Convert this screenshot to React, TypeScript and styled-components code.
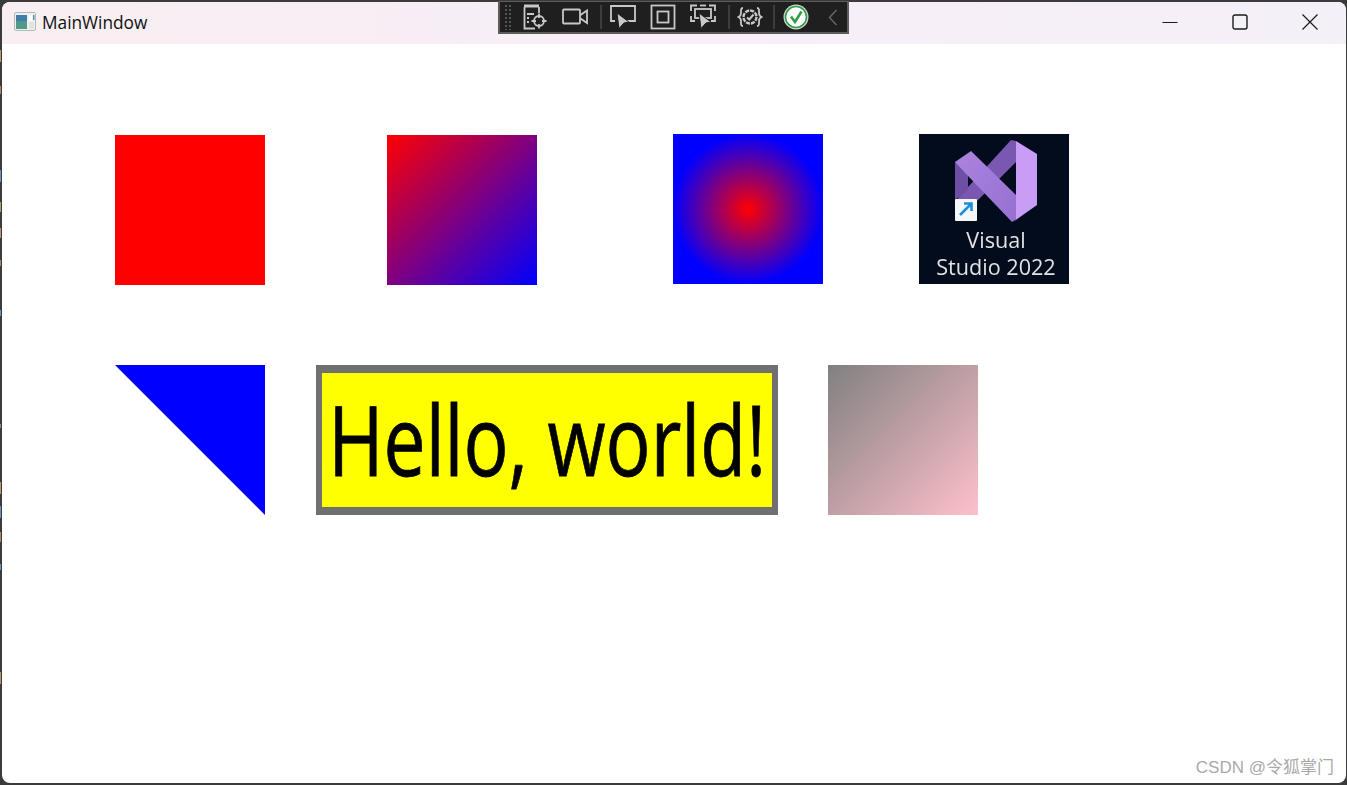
import React from "react";
import styled, { createGlobalStyle } from "styled-components";

const GlobalStyle = createGlobalStyle`
  html, body {
    margin: 0;
    height: 785px;
    overflow: hidden;
    background: #3b3b3b;
  }
`;

const Frame = styled.div`
  position: relative;
  width: 1347px;
  height: 785px;
  padding: 2px 1px 2px 2px;
  box-sizing: border-box;
`;

const DesktopEdge = styled.div`
  position: absolute;
  left: 0;
  top: 44px;
  width: 1px;
  height: 741px;
  background: linear-gradient(
    to bottom,
    #3b3b3b 0 6px, #b59a72 6px 18px, #3b3b3b 18px 42px, #b08a5c 42px 50px,
    #3b3b3b 50px 126px, #6f93b5 126px 138px, #3b3b3b 138px 158px, #b59a72 158px 168px,
    #3b3b3b 168px 184px, #b59a72 184px 194px, #3b3b3b 194px 216px, #a5856b 216px 222px,
    #3b3b3b 222px 266px, #6f93b5 266px 272px, #3b3b3b 272px 380px, #8a8a8a 380px 384px,
    #3b3b3b 384px 438px, #b59a72 438px 450px, #3b3b3b 450px 462px, #6f93b5 462px 474px,
    #3b3b3b 474px 488px, #b08a5c 488px 498px, #3b3b3b 498px 520px, #6f93b5 520px 526px,
    #3b3b3b 526px 628px, #b59a72 628px 640px, #3b3b3b 640px
  );
`;

const Window = styled.div`
  height: 100%;
  background: #fff;
  border-radius: 8px;
  overflow: hidden;
  display: flex;
  flex-direction: column;
`;

const TitleBar = styled.header`
  flex: none;
  height: 42px;
  box-sizing: border-box;
  padding: 0 1px 2px 0;
  display: flex;
  align-items: center;
  background: linear-gradient(to right, #f7eff1, #f7eef8 55%, #f4f0f8);
`;

const AppIcon = styled.svg`
  margin-left: 12px;
  width: 22px;
  height: 20px;
`;

const Title = styled.span`
  margin-left: 6px;
  padding-top: 1px;
  font: 17.3px "Open Sans", "Noto Sans", sans-serif;
  color: #111;
  flex: 1;
`;

const WindowControl = styled.div`
  width: 70px;
  height: 40px;
  display: flex;
  align-items: center;
  justify-content: center;
`;

const Content = styled.main`
  flex: 1;
  padding: 91px 0 0 113px;
  display: flex;
  flex-direction: column;
  gap: 80px;
`;

const Row = styled.div`
  display: flex;
  align-items: flex-start;
`;

const Swatch = styled.div<{ $fill: string; $gap?: number; $raised?: boolean }>`
  flex: none;
  width: 150px;
  height: 150px;
  background: ${(p) => p.$fill};
  margin-left: ${(p) => p.$gap ?? 0}px;
  margin-top: ${(p) => (p.$raised ? -1 : 0)}px;
`;

const Triangle = styled.div`
  flex: none;
  width: 150px;
  height: 150px;
  background: #0000ff;
  clip-path: polygon(0 0, 100% 0, 100% 100%);
`;

const HelloBox = styled.div`
  flex: none;
  margin-left: 51px;
  width: 462px;
  height: 150px;
  box-sizing: border-box;
  border-style: solid;
  border-color: #707070;
  border-width: 8px 6px;
  padding-bottom: 4px;
  background: #ffff00;
  display: flex;
  align-items: center;
  justify-content: center;
`;

const HelloText = styled.span`
  flex: none;
  font: 97px/130px "Open Sans", "Noto Sans", sans-serif;
  color: #000;
  -webkit-text-stroke: 0.8px #000;
  white-space: nowrap;
  transform: scaleX(0.773);
`;

const ShortcutTile = styled.div`
  flex: none;
  margin-left: 96px;
  margin-top: -1px;
  width: 150px;
  height: 150px;
  background: #020c1c;
  display: flex;
  flex-direction: column;
`;

const ShortcutLogo = styled.svg`
  flex: none;
  width: 150px;
  height: 92px;
  filter: blur(0.4px);
`;

const ShortcutLabel = styled.div`
  margin-left: 4px;
  text-align: center;
  white-space: nowrap;
  font: 21.6px/27px "Open Sans", "Noto Sans", sans-serif;
  color: #e2e2e2;
  filter: blur(0.35px);
`;

const DebugBar = styled.div`
  position: absolute;
  left: 498px;
  top: 1px;
  width: 351px;
  height: 33px;
  box-sizing: border-box;
  border: 2px solid #5c5c5c;
  border-top-width: 1px;
  background: #1f1f1f;
  display: flex;
  align-items: center;
`;

const Grip = styled.div`
  flex: none;
  margin-left: 4px;
  margin-right: 2px;
  width: 9px;
  height: 26px;
  background-image: radial-gradient(circle, #555 1px, transparent 1.2px);
  background-size: 4px 4px;
`;

const ToolSlot = styled.div<{ $width?: number }>`
  flex: none;
  width: ${(p) => p.$width ?? 40}px;
  display: flex;
  justify-content: center;
`;

const ToolSeparator = styled.div<{ $before: number; $after: number }>`
  flex: none;
  width: 2px;
  height: 24px;
  background: #3d3d3d;
  margin-left: ${(p) => p.$before}px;
  margin-right: ${(p) => p.$after}px;
`;

const Watermark = styled.div`
  position: absolute;
  right: 13px;
  bottom: 7px;
  font: 17px/20px "Liberation Sans", "Noto Sans CJK SC", sans-serif;
  color: #a9a9a9;
`;

const ToolIcon: React.FC<{ children: React.ReactNode }> = ({ children }) => (
  <svg width="26" height="26" viewBox="0 0 26 26" fill="none" stroke="#c8c8c8" strokeWidth="1.8">
    {children}
  </svg>
);

const Pointer = ({ x, y }: { x: number; y: number }) => (
  <path
    transform={`translate(${x} ${y})`}
    d="M0 0 L12 9 L7 10 L2 15.5 Z"
    fill="#c8c8c8"
    stroke="#1f1f1f"
    strokeWidth="1"
  />
);

const App: React.FC = () => (
  <>
    <GlobalStyle />
    <Frame>
      <DesktopEdge />
      <Window>
        <TitleBar>
          <AppIcon viewBox="0 0 22 20">
            <rect x="0.5" y="0.5" width="21" height="18" rx="1.5" fill="#eef0f0" stroke="#b4b8bc" />
            <rect x="2" y="3" width="11" height="14" fill="#4f9a86" />
            <rect x="2" y="3" width="11" height="6" fill="#3f7ea6" />
            <rect x="15" y="3" width="3" height="6" fill="#fdfdfd" />
            <rect x="19" y="3" width="1.5" height="5" fill="#5f8fa8" />
            <rect x="15" y="10" width="5" height="7" fill="#dfe4e2" />
          </AppIcon>
          <Title>MainWindow</Title>
          <WindowControl>
            <svg width="16" height="16" viewBox="0 0 16 16" stroke="#1a1a1a" fill="none">
              <path d="M0.5 8.5H15.5" />
            </svg>
          </WindowControl>
          <WindowControl>
            <svg width="16" height="16" viewBox="0 0 16 16" stroke="#1a1a1a" strokeWidth="1.4" fill="none">
              <rect x="1" y="1" width="14" height="14" rx="2" />
            </svg>
          </WindowControl>
          <WindowControl>
            <svg width="16" height="16" viewBox="0 0 16 16" stroke="#1a1a1a" strokeWidth="1.2" fill="none">
              <path d="M0.5 0.5L15.5 15.5M15.5 0.5L0.5 15.5" />
            </svg>
          </WindowControl>
        </TitleBar>
        <Content>
          <Row>
            <Swatch $fill="#ff0000" />
            <Swatch $gap={122} $fill="linear-gradient(135deg, #ff0000, #0000ff)" />
            <Swatch $gap={136} $raised $fill="radial-gradient(closest-side, #ff0000, #0000ff)" />
            <ShortcutTile>
              <ShortcutLogo viewBox="0 0 150 92">
                <defs>
                  <linearGradient id="vsMain" x1="0" y1="0" x2="1" y2="1">
                    <stop offset="0" stopColor="#ab84df" />
                    <stop offset="1" stopColor="#9570d0" />
                  </linearGradient>
                </defs>
                <polygon points="39,64 92,6 97,7 97,28 53,72 39,72" fill="#7a58b2" />
                <polygon points="36,28 49,37 49,56 36,66" fill="#6f4ea6" />
                <polygon points="36,28 52,17 97,61 97,85 93,88 50,43" fill="url(#vsMain)" />
                <polygon points="97,7 118,20 118,71 94,88 97,85" fill="#c99cf6" />
                <rect x="36" y="65" width="22" height="22" rx="1" fill="#f6f8fa" />
                <path d="M41 81L52 70M45 69.5H52.5V77" stroke="#1c8fdc" strokeWidth="2.6" fill="none" />
              </ShortcutLogo>
              <ShortcutLabel>
                Visual
                <br />
                Studio 2022
              </ShortcutLabel>
            </ShortcutTile>
          </Row>
          <Row>
            <Triangle />
            <HelloBox>
              <HelloText>Hello, world!</HelloText>
            </HelloBox>
            <Swatch $gap={50} $fill="linear-gradient(135deg, #808080, #ffc0cb)" />
          </Row>
        </Content>
      </Window>
      <DebugBar>
        <Grip />
        <ToolSlot>
          <ToolIcon>
            <path d="M2 2H17" strokeWidth="3" />
            <path d="M2.5 3V24.5H13M17 3V9" />
            <path d="M5 10H12M5 14H7M5 18H7" />
            <circle cx="17" cy="17" r="5" />
            <path d="M17 9.5V14M17 20V24.5M9.5 17H14M20 17H24.5" />
          </ToolIcon>
        </ToolSlot>
        <ToolSlot>
          <ToolIcon>
            <rect x="1" y="5.5" width="17" height="14" rx="1" />
            <path d="M18.5 11L25 6.5V19L18.5 14.5" />
          </ToolIcon>
        </ToolSlot>
        <ToolSeparator $before={5} $after={1} />
        <ToolSlot>
          <ToolIcon>
            <path d="M5 17H1V2H25V17H17" />
            <Pointer x={7} y={9} />
          </ToolIcon>
        </ToolSlot>
        <ToolSlot>
          <ToolIcon>
            <rect x="1.5" y="1.5" width="23" height="23" />
            <rect x="7.5" y="7.5" width="11" height="11" />
          </ToolIcon>
        </ToolSlot>
        <ToolSlot>
          <ToolIcon>
            <path d="M1 7V1.5H7M19 1.5H25V7M1 12V17H5M25 12V17H21" />
            <path d="M10 1.5H16" />
            <rect x="5" y="5" width="16" height="9" />
            <Pointer x={9} y={9} />
          </ToolIcon>
        </ToolSlot>
        <ToolSeparator $before={5} $after={0} />
        <ToolSlot>
          <ToolIcon>
            <path d="M6 4C3.5 4 4 7 4 9C4 11 3.5 12 1.5 13C3.5 14 4 15 4 17C4 19 3.5 22 6 22" />
            <path d="M20 4C22.5 4 22 7 22 9C22 11 22.5 12 24.5 13C22.5 14 22 15 22 17C22 19 22.5 22 20 22" />
            <circle cx="13" cy="13" r="6.5" strokeWidth="2.4" strokeDasharray="4 1" />
            <path d="M10 13.5L12.3 15.5L16.5 10.5" strokeWidth="2" />
          </ToolIcon>
        </ToolSlot>
        <ToolSeparator $before={3} $after={1} />
        <ToolSlot>
          <svg width="26" height="26" viewBox="0 0 26 26" fill="none">
            <circle cx="13" cy="13" r="12.5" fill="#d8d8d8" />
            <circle cx="13" cy="13" r="10.5" fill="#fff" stroke="#2f9e44" strokeWidth="1.6" />
            <path d="M8 12.5L12 18L18.5 7.5" stroke="#2f9e44" strokeWidth="2.6" />
          </svg>
        </ToolSlot>
        <ToolSlot $width={34}>
          <svg width="10" height="17" viewBox="0 0 10 17" fill="none" stroke="#666" strokeWidth="1.5">
            <path d="M8.5 1L1.5 8.5L8.5 16" />
          </svg>
        </ToolSlot>
      </DebugBar>
      <Watermark>CSDN @令狐掌门</Watermark>
    </Frame>
  </>
);

export default App;
